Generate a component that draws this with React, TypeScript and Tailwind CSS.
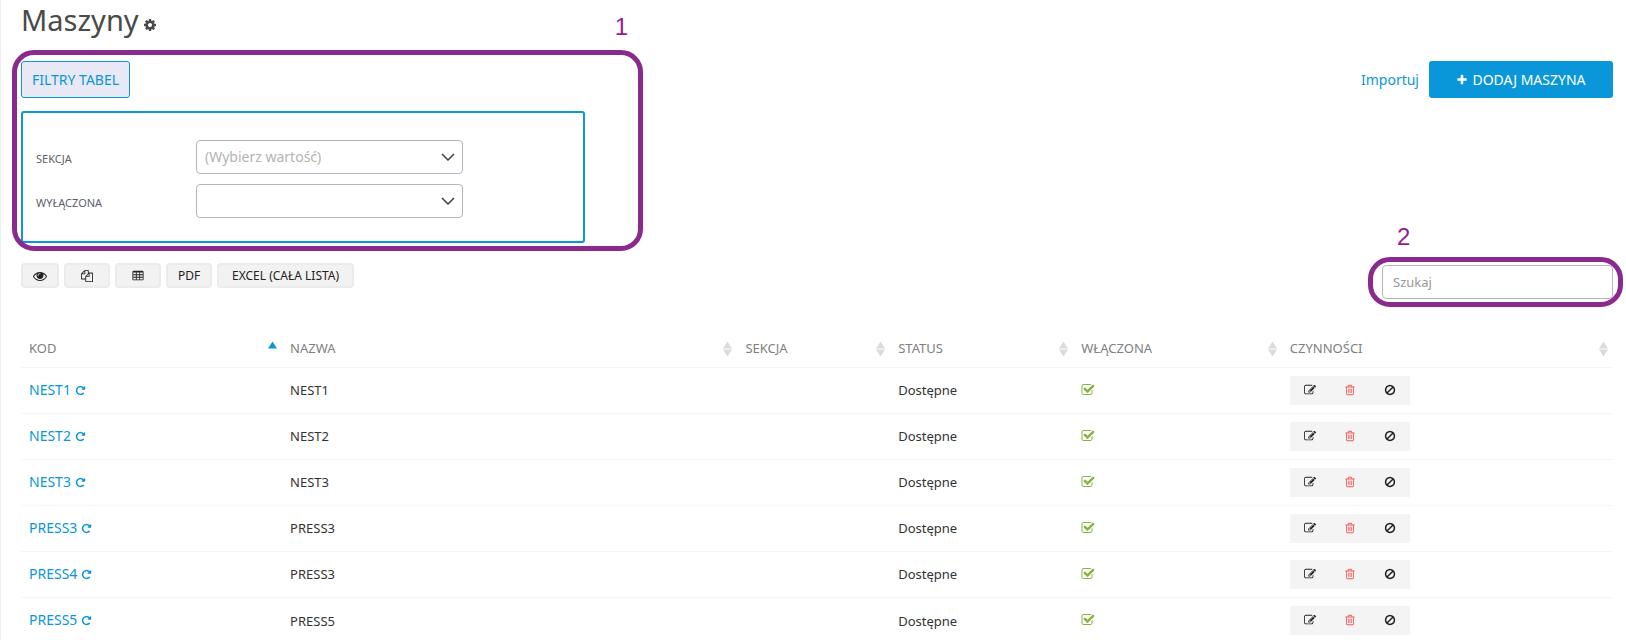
import React from "react";

const ICONS = {
  cog: "M1152 896q0-106-75-181t-181-75-181 75-75 181 75 181 181 75 181-75 75-181zm512-109v222q0 12-8 23t-20 13l-185 28q-19 54-39 91 35 50 107 138 10 12 10 25t-9 23q-27 37-99 108t-94 71q-12 0-26-9l-138-108q-44 23-91 38-16 136-29 186-7 28-36 28h-222q-14 0-24.5-8.5t-11.5-21.5l-28-184q-49-16-90-37l-141 107q-10 9-25 9-14 0-25-11-126-114-165-168-7-10-7-23 0-12 8-23 15-21 51-66.5t54-70.5q-27-50-41-99l-183-27q-13-2-21-12.5t-8-23.5v-222q0-12 8-23t19-13l186-28q14-46 39-92-40-57-107-138-10-12-10-24 0-10 9-23 26-36 98.5-107.5t94.5-71.5q13 0 26 10l138 107q44-23 91-38 16-136 29-186 7-28 36-28h222q14 0 24.5 8.5t11.5 21.5l28 184q49 16 90 37l142-107q9-9 24-9 13 0 25 10 129 119 165 170 7 8 7 22 0 12-8 23-15 21-51 66.5t-54 70.5q26 50 41 98l183 28q13 2 21 12.5t8 23.5z",
  plus: "M1600 736v192q0 40-28 68t-68 28h-416v416q0 40-28 68t-68 28h-192q-40 0-68-28t-28-68v-416h-416q-40 0-68-28t-28-68v-192q0-40 28-68t68-28h416v-416q0-40 28-68t68-28h192q40 0 68 28t28 68v416h416q40 0 68 28t28 68z",
  eye: "M1664 960q-152-236-381-353 61 104 61 225 0 185-131.5 316.5t-316.5 131.5-316.5-131.5-131.5-316.5q0-121 61-225-229 117-381 353 133 205 333.5 326.5t434.5 121.5 434.5-121.5 333.5-326.5zm-720-384q0-20-14-34t-34-14q-125 0-214.5 89.5t-89.5 214.5q0 20 14 34t34 14 34-14 14-34q0-86 61-147t147-61q20 0 34-14t14-34zm848 384q0 34-20 69-140 230-376.5 368.5t-499.5 138.5-499.5-139-376.5-368q-20-35-20-69t20-69q140-229 376.5-368t499.5-139 499.5 139 376.5 368q20 35 20 69z",
  copy: "M1696 384q40 0 68 28t28 68v1216q0 40-28 68t-68 28h-960q-40 0-68-28t-28-68v-288h-544q-40 0-68-28t-28-68v-672q0-40 20-88t48-76l408-408q28-28 76-48t88-20h416q40 0 68 28t28 68v328q68-40 128-40h416zm-544 213l-299 299h299v-299zm-640-384l-299 299h299v-299zm196 647l316-316v-416h-384v416q0 40-28 68t-68 28h-416v640h512v-256q0-40 20-88t48-76zm956 804v-1152h-384v416q0 40-28 68t-68 28h-416v640h896z",
  table:
    "M1728 288v1088q0 66-47 113t-113 47h-1344q-66 0-113-47t-47-113v-1088q0-66 47-113t113-47h1344q66 0 113 47t47 113zM192 384v256h384v-256zM704 384v256h384v-256zM1216 384v256h384v-256zM192 768v256h384v-256zM704 768v256h384v-256zM1216 768v256h384v-256zM192 1152v256h384v-256zM704 1152v256h384v-256zM1216 1152v256h384v-256z",
  check:
    "M1472 930v318q0 119-84.5 203.5t-203.5 84.5h-832q-119 0-203.5-84.5t-84.5-203.5v-832q0-119 84.5-203.5t203.5-84.5h832q63 0 117 25 15 7 18 23 3 17-9 29l-49 49q-10 10-23 10-3 0-9-2-23-6-45-6h-832q-66 0-113 47t-47 113v832q0 66 47 113t113 47h832q66 0 113-47t47-113v-254q0-13 9-22l64-64q10-10 23-10 6 0 12 3 20 8 20 29zm231-489l-814 814q-24 24-57 24t-57-24l-430-430q-24-24-24-57t24-57l110-110q24-24 57-24t57 24l263 263 647-647q24-24 57-24t57 24l110 110q24 24 24 57t-24 57z",
  edit: "M888 1184l116-116-152-152-116 116v56h96v96h56zm440-720q-16-16-33 1l-350 350q-17 17-1 33t33-1l350-350q17-17 1-33zm80 594v190q0 119-84.5 203.5t-203.5 84.5h-832q-119 0-203.5-84.5t-84.5-203.5v-832q0-119 84.5-203.5t203.5-84.5h832q63 0 117 25 15 7 18 23 3 17-9 29l-49 49q-14 14-32 8-23-6-45-6h-832q-66 0-113 47t-47 113v832q0 66 47 113t113 47h832q66 0 113-47t47-113v-126q0-13 9-22l64-64q15-15 35-7t20 29zm-96-738l288 288-672 672h-288v-288zm444 132l-92 92-288-288 92-92q28-28 68-28t68 28l152 152q28 28 28 68t-28 68z",
  trash:
    "M704 736v576q0 14-9 23t-23 9h-64q-14 0-23-9t-9-23v-576q0-14 9-23t23-9h64q14 0 23 9t9 23zm256 0v576q0 14-9 23t-23 9h-64q-14 0-23-9t-9-23v-576q0-14 9-23t23-9h64q14 0 23 9t9 23zm256 0v576q0 14-9 23t-23 9h-64q-14 0-23-9t-9-23v-576q0-14 9-23t23-9h64q14 0 23 9t9 23zm128 724v-948h-896v948q0 22 7 40.5t14.5 27 10.5 8.5h832q3 0 10.5-8.5t14.5-27 7-40.5zm-672-1076h448l-48-117q-7-9-17-11h-317q-10 2-17 11zm928 32v64q0 14-9 23t-23 9h-96v948q0 83-47 143.5t-113 60.5h-832q-66 0-113-58.5t-47-141.5v-952h-96q-14 0-23-9t-9-23v-64q0-14 9-23t23-9h309l70-167q15-37 54-63t79-26h320q40 0 79 26t54 63l70 167h309q14 0 23 9t9 23z",
  ban: "M1440 893q0-161-87-295l-754 753q137 89 297 89 111 0 211.5-43.5t173.5-116.5 116-174.5 43-212.5zm-999 299l755-754q-135-91-300-91-148 0-273 73t-198 199-73 274q0 162 89 299zm1223-299q0 157-61 300t-163.5 246-245 164-298.5 61-298.5-61-245-164-163.5-246-61-300 61-299.5 163.5-245.5 245-164 298.5-61 298.5 61 245 164 163.5 245.5 61 299.5z",
  repeat:
    "M1664 256v448q0 26-19 45t-45 19h-448q-42 0-59-40-17-39 14-69l138-138q-148-137-349-137-104 0-198.5 40.5t-163.5 109.5-109.5 163.5-40.5 198.5 40.5 198.5 109.5 163.5 163.5 109.5 198.5 40.5q119 0 225-52t179-147q7-10 23-12 15 0 25 9l137 138q9 8 9.5 20.5t-7.5 22.5q-109 132-264 204.5t-327 72.5q-156 0-298-61t-245-164-164-245-61-298 61-298 164-245 245-164 298-61q147 0 284.5 55.5t244.5 156.5l130-129q29-31 70-14 39 17 39 59z",
};

function Icon({ name, className }: { name: keyof typeof ICONS; className: string }) {
  return (
    <svg viewBox="0 0 1792 1792" fill="currentColor" aria-hidden="true" className={`shrink-0 ${className}`}>
      <path d={ICONS[name]} />
    </svg>
  );
}

function FilterSelect({ id, label, placeholder }: { id: string; label: string; placeholder: string }) {
  return (
    <div className="flex items-center">
      <label htmlFor={id} className="w-40 pt-1 text-[11px] text-[#5c5f6b]">
        {label}
      </label>
      <div className="relative w-[267px]">
        <select
          id={id}
          className="h-[34px] w-full appearance-none rounded-sm border border-[#b5b5bf] bg-white px-2 text-sm text-[#b3b3b3]"
        >
          <option>{placeholder}</option>
        </select>
        <svg
          viewBox="0 0 14 8"
          fill="none"
          stroke="#3c4050"
          strokeWidth="1.5"
          aria-hidden="true"
          className="pointer-events-none absolute top-[13px] right-2 h-2 w-3.5"
        >
          <path d="M1 1l6 6 6-6" />
        </svg>
      </div>
    </div>
  );
}

function ToolButton({ label, className, children }: { label: string; className: string; children: React.ReactNode }) {
  return (
    <button
      type="button"
      aria-label={label}
      className={`flex h-[25px] items-center justify-center rounded-sm border-2 border-[#ebebeb] bg-[#f2f2f2] text-xs text-[#222222] ${className}`}
    >
      {children}
    </button>
  );
}

const COLUMNS = [
  { title: "KOD", width: "w-[16.4%]" },
  { title: "NAZWA", width: "w-[28.6%]" },
  { title: "SEKCJA", width: "w-[9.6%]" },
  { title: "STATUS", width: "w-[11.5%]" },
  { title: "WŁĄCZONA", width: "w-[13.1%]" },
  { title: "CZYNNOŚCI", width: "w-[20.8%]" },
];

const ROWS = [
  { code: "NEST1", name: "NEST1" },
  { code: "NEST2", name: "NEST2" },
  { code: "NEST3", name: "NEST3" },
  { code: "PRESS3", name: "PRESS3" },
  { code: "PRESS4", name: "PRESS3" },
  { code: "PRESS5", name: "PRESS5" },
];

function SortMark({ sorted }: { sorted: boolean }) {
  return (
    <svg viewBox="0 0 9 16" aria-hidden="true" className="h-4 w-[9px] shrink-0">
      <path d="M4.500 .5L9 7.500H0z" fill={sorted ? "#0997d9" : "#dadada"} />
      {!sorted && <path d="M0 8.500h9l-4.500 7z" fill="#dadada" />}
    </svg>
  );
}

export default function App() {
  return (
    <main className="min-h-screen overflow-hidden border-l border-[#eeeeee] bg-white pr-[13px] pl-5 font-['Noto_Sans',sans-serif] text-[13px] text-[#333333]">
      <header className="flex h-10 items-center gap-1">
        <h1 className="text-[29px] leading-10 text-[#4a4a4a]">Maszyny</h1>
        <button type="button" aria-label="Ustawienia" className="pt-2.5 text-[#4a4a4a]">
          <Icon name="cog" className="size-[14px]" />
        </button>
      </header>

      <div className="mt-[21px] flex items-start justify-between">
        <section className="relative w-[564px]">
          <button
            type="button"
            className="h-[37px] rounded-[3px] border border-[#0997d9] bg-[#e9e9f6] px-2.5 text-sm text-[#0997d9]"
          >
            FILTRY TABEL
          </button>
          <div className="mt-[13px] flex flex-col gap-2.5 rounded-[3px] border-2 border-[#0997d9] px-[13px] pt-[27px] pb-[23px]">
            <FilterSelect id="sekcja" label="SEKCJA" placeholder="(Wybierz wartość)" />
            <FilterSelect id="wylaczona" label="WYŁĄCZONA" placeholder="" />
          </div>
          <div className="pointer-events-none absolute -top-[11px] -right-[58px] -bottom-2 -left-[9px] rounded-[22px] border-5 border-[#8a2a8f]" />
          <span className="absolute -top-[50px] -right-[43px] font-['Liberation_Sans',sans-serif] text-2xl text-[#951b92]">1</span>
        </section>

        <div className="flex items-center gap-2.5">
          <a href="#import" className="text-sm text-[#0997d9]">
            Importuj
          </a>
          <button
            type="button"
            className="flex h-[37px] w-[184px] items-center justify-center gap-1 rounded-[3px] bg-[#0997d9] text-sm text-white"
          >
            <Icon name="plus" className="size-3" />
            DODAJ MASZYNA
          </button>
        </div>
      </div>

      <div className="mt-5 flex items-start justify-between">
        <div className="flex gap-[5px]">
          <ToolButton label="Widoczność kolumn" className="w-[38px]">
            <Icon name="eye" className="size-3.5" />
          </ToolButton>
          <ToolButton label="Kopiuj" className="w-[46px]">
            <Icon name="copy" className="size-3" />
          </ToolButton>
          <ToolButton label="Arkusz" className="w-[46px]">
            <Icon name="table" className="size-3" />
          </ToolButton>
          <ToolButton label="PDF" className="w-[46px]">
            PDF
          </ToolButton>
          <ToolButton label="EXCEL (CAŁA LISTA)" className="px-[13px]">
            EXCEL (CAŁA LISTA)
          </ToolButton>
        </div>
        <div className="relative mt-0.5 w-[231px]">
          <input
            type="search"
            aria-label="Szukaj"
            placeholder="Szukaj"
            className="block h-[34px] w-full rounded-sm border border-[#b5b5bf] bg-white px-2.5 text-[13px] placeholder:text-[#999999]"
          />
          <div className="pointer-events-none absolute -top-2 -right-2.5 -bottom-2 -left-3.5 rounded-[22px] border-5 border-[#8a2a8f]" />
          <span className="absolute -top-[44px] left-[15px] font-['Liberation_Sans',sans-serif] text-2xl text-[#951b92]">2</span>
        </div>
      </div>

      <table className="mt-8 w-full table-fixed border-collapse">
        <thead>
          <tr className="h-[36px]">
            {COLUMNS.map((column, index) => (
              <th key={column.title} className={`pr-[5px] pl-2 text-left font-normal text-[#808080] ${column.width}`}>
                <div className="flex items-center justify-between">
                  {column.title}
                  <SortMark sorted={index === 0} />
                </div>
              </th>
            ))}
          </tr>
        </thead>
        <tbody>
          {ROWS.map((row) => (
            <tr key={row.code} className="h-[46px] border-t border-[#f6f6f6]">
              <td className="pl-2">
                <a href={`#${row.code}`} className="flex items-center gap-1 text-sm text-[#0997d9]">
                  {row.code}
                  <Icon name="repeat" className="size-[11px]" />
                </a>
              </td>
              <td className="pt-0.5 pl-2">{row.name}</td>
              <td />
              <td className="pt-0.5 pl-2">Dostępne</td>
              <td className="pl-2 text-[#86b440]">
                <Icon name="check" className="size-[14px]" />
              </td>
              <td className="pl-2">
                <div className="flex h-[29px] w-[120px] items-center bg-[#f4f4f4] text-[#222222]">
                  <button type="button" aria-label="Edytuj" className="flex flex-1 justify-center">
                    <Icon name="edit" className="size-3" />
                  </button>
                  <button type="button" aria-label="Usuń" className="flex flex-1 justify-center text-[#f05a5a]">
                    <Icon name="trash" className="size-3" />
                  </button>
                  <button type="button" aria-label="Wyłącz" className="flex flex-1 justify-center">
                    <Icon name="ban" className="size-3" />
                  </button>
                </div>
              </td>
            </tr>
          ))}
        </tbody>
      </table>
    </main>
  );
}
